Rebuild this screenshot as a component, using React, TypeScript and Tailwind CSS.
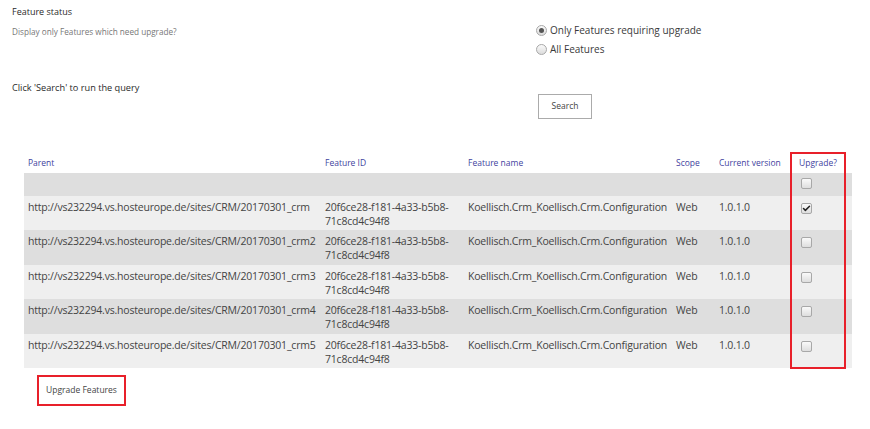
import { Check } from 'lucide-react'

const rows = [
  { parent: 'http://vs232294.vs.hosteurope.de/sites/CRM/20170301_crm', checked: true },
  { parent: 'http://vs232294.vs.hosteurope.de/sites/CRM/20170301_crm2', checked: false },
  { parent: 'http://vs232294.vs.hosteurope.de/sites/CRM/20170301_crm3', checked: false },
  { parent: 'http://vs232294.vs.hosteurope.de/sites/CRM/20170301_crm4', checked: false },
  { parent: 'http://vs232294.vs.hosteurope.de/sites/CRM/20170301_crm5', checked: false },
]

function Box({ checked }: { checked?: boolean }) {
  return (
    <span className="inline-flex items-center justify-center w-[11px] h-[11px] rounded-[2px] border border-[#a8a8a8] bg-gradient-to-b from-[#fafafa] to-[#dedede]">
      {checked && <Check className="w-[9px] h-[9px] text-[#222]" strokeWidth={4} />}
    </span>
  )
}

function Radio({ checked, label }: { checked?: boolean; label: string }) {
  return (
    <div className="flex items-center gap-[3px] h-[19px]">
      <span className="inline-flex items-center justify-center w-[11px] h-[11px] rounded-full border border-[#a8a8a8] bg-gradient-to-b from-[#fafafa] to-[#dcdcdc]">
        {checked && <span className="w-[5px] h-[5px] rounded-full bg-[#555]" />}
      </span>
      <span className="text-[10px] text-[#3a3a3a]">{label}</span>
    </div>
  )
}

export default function App() {
  return (
    <div className="w-[870px] h-[429px] bg-white font-['Open_Sans',sans-serif] text-[#444]">
      {/* query options */}
      <div className="flex pt-[5px]">
        <div className="w-[536px] pl-[12px]">
          <p className="text-[9px] text-[#2a2a2a] leading-[14px]">Feature status</p>
          <p className="text-[8.2px] text-[#777] leading-[12px] mt-[7px]">Display only Features which need upgrade?</p>
          <p className="text-[9.2px] text-[#2a2a2a] leading-[14px] mt-[43px]">Click 'Search' to run the query</p>
        </div>
        <div className="pt-[16px]">
          <Radio checked label="Only Features requiring upgrade" />
          <Radio label="All Features" />
          <button className="mt-[35px] ml-[2px] w-[54px] h-[25px] border border-[#ababab] bg-white text-[8.5px] text-[#444]">
            Search
          </button>
        </div>
      </div>

      {/* results */}
      <div className="relative ml-[24px] mt-[33px] w-[828px]">
        <table className="w-full border-collapse text-[10.5px] tracking-[-0.2px] text-[#444] table-fixed">
          <colgroup>
            <col className="w-[297px]" />
            <col className="w-[143px]" />
            <col className="w-[208px]" />
            <col className="w-[43px]" />
            <col className="w-[80px]" />
            <col />
          </colgroup>
          <thead>
            <tr className="h-[21px] text-[8.5px] tracking-normal text-[#3f3fa0] text-left align-top">
              <th className="font-normal pl-[4px] pt-[5px] leading-[12px]">Parent</th>
              <th className="font-normal pl-[4px] pt-[5px] leading-[12px]">Feature ID</th>
              <th className="font-normal pl-[4px] pt-[5px] leading-[12px]">Feature name</th>
              <th className="font-normal pl-[4px] pt-[5px] leading-[12px]">Scope</th>
              <th className="font-normal pl-[4px] pt-[5px] leading-[12px]">Current version</th>
              <th className="font-normal pl-[4px] pt-[5px] leading-[12px]">Upgrade?</th>
            </tr>
          </thead>
          <tbody>
            <tr className="h-[23px] bg-[#dedede] align-top">
              <td colSpan={5} />
              <td className="pl-[6px] pt-[5px] leading-none"><Box /></td>
            </tr>
            {rows.map((r, i) => (
              <tr key={r.parent} className={`h-[34.4px] align-top ${i % 2 === 0 ? 'bg-[#efefef]' : 'bg-[#dedede]'}`}>
                <td className="pl-[4px] pt-[4px] leading-[14px] whitespace-nowrap">{r.parent}</td>
                <td className="pl-[4px] pt-[4px] leading-[14px] whitespace-nowrap">20f6ce28-f181-4a33-b5b8-<br />71c8cd4c94f8</td>
                <td className="pl-[4px] pt-[4px] leading-[14px] whitespace-nowrap">Koellisch.Crm_Koellisch.Crm.Configuration</td>
                <td className="pl-[4px] pt-[4px] leading-[14px]">Web</td>
                <td className="pl-[4px] pt-[4px] leading-[14px]">1.0.1.0</td>
                <td className="pl-[6px] pt-[7px] leading-none"><Box checked={r.checked} /></td>
              </tr>
            ))}
          </tbody>
        </table>
        {/* red highlight around the Upgrade? column */}
        <div className="absolute top-0 left-[766px] w-[56px] h-[217px] border-2 border-[#e8202a] pointer-events-none" />
      </div>

      <div className="ml-[37px] mt-[7px] inline-block border-2 border-[#e8202a]">
        <button className="block w-[85px] h-[27px] bg-white text-[8.5px] text-[#444]">Upgrade Features</button>
      </div>
    </div>
  )
}
